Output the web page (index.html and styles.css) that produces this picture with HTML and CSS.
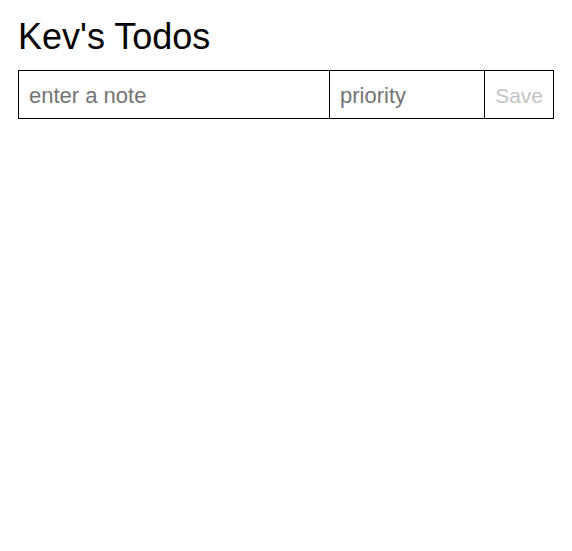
FILE: index.html
```html
<!DOCTYPE html>
<html>
<head>
<meta charset="utf-8">
<link rel="stylesheet" href="styles.css">
</head>
<body>
<div class="app">
  <h1 class="title">Kev's Todos</h1>
  <form class="todo-form">
    <input class="field note" type="text" placeholder="enter a note">
    <input class="field priority" type="text" placeholder="priority">
    <button class="save" type="button" disabled>Save</button>
  </form>
</div>
</body>
</html>
```
FILE: styles.css
```css
html, body {
  margin: 0;
  padding: 0;
  background: #fff;
}
body {
  font-family: "Liberation Sans", Arial, sans-serif;
}
.app {
  padding: 16px 18px;
}
.title {
  margin: 0 0 13px 0;
  font-size: 36px;
  font-weight: normal;
  line-height: 41px;
  color: #000;
}
.todo-form {
  display: flex;
  width: 534px;
  height: 47px;
  border: 1px solid #000;
}
.field {
  font-family: "Liberation Sans", Arial, sans-serif;
  font-size: 22px;
  border: none;
  border-right: 1px solid #000;
  padding: 2px 10px 0 10px;
  margin: 0;
  outline: none;
  box-sizing: border-box;
  height: 47px;
  color: #000;
}
.field::placeholder {
  color: #757575;
}
.note {
  width: 311px;
}
.priority {
  width: 155px;
}
.save {
  flex: 1;
  font-family: "Liberation Sans", Arial, sans-serif;
  font-size: 21px;
  background: #fff;
  border: none;
  margin: 0;
  padding: 2px 10px 0 10px;
  color: #c4c4c4;
  text-align: right;
}
```
